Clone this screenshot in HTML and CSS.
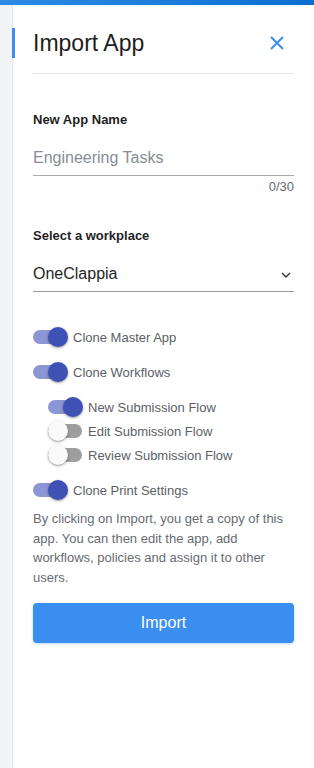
FILE: index.html
```html
<!DOCTYPE html>
<html lang="en">
<head>
<meta charset="utf-8">
<title>Import App</title>
<link rel="stylesheet" href="styles.css">
</head>
<body>
<div class="topbar"></div>
<div class="layout">
  <div class="rail"></div>
  <main class="panel">
    <header class="header">
      <h1 class="title">Import App</h1>
      <button class="close" aria-label="Close">
        <svg width="16" height="16" viewBox="0 0 16 16"><path d="M2 2 L14 14 M14 2 L2 14" stroke="#3a8ef0" stroke-width="2" fill="none"/></svg>
      </button>
    </header>

    <section class="field field-name">
      <div class="label">New App Name</div>
      <div class="input placeholder">Engineering Tasks</div>
      <div class="counter">0/30</div>
    </section>

    <section class="field field-workplace">
      <div class="label">Select a workplace</div>
      <div class="input select">
        <span>OneClappia</span>
        <svg class="chev" width="10" height="6" viewBox="0 0 10 6"><path d="M1 1 L5 5 L9 1" stroke="#333" stroke-width="1.4" fill="none"/></svg>
      </div>
    </section>

    <section class="toggles">
      <div class="row"><span class="switch on"><span class="track"></span><span class="thumb"></span></span><span class="tlabel">Clone Master App</span></div>
      <div class="row"><span class="switch on"><span class="track"></span><span class="thumb"></span></span><span class="tlabel">Clone Workflows</span></div>
      <div class="sub">
        <div class="row"><span class="switch on"><span class="track"></span><span class="thumb"></span></span><span class="tlabel">New Submission Flow</span></div>
        <div class="row"><span class="switch"><span class="track"></span><span class="thumb"></span></span><span class="tlabel">Edit Submission Flow</span></div>
        <div class="row"><span class="switch"><span class="track"></span><span class="thumb"></span></span><span class="tlabel">Review Submission Flow</span></div>
      </div>
      <div class="row"><span class="switch on"><span class="track"></span><span class="thumb"></span></span><span class="tlabel">Clone Print Settings</span></div>
    </section>

    <p class="note">By clicking on Import, you get a copy of this app. You can then edit the app, add workflows, policies and assign it to other users.</p>

    <button class="import">Import</button>
  </main>
</div>
</body>
</html>
```

FILE: styles.css
```css
* { box-sizing: border-box; }
html, body { margin: 0; padding: 0; background: #fff; }
body {
  font-family: "Liberation Sans", Arial, sans-serif;
  color: #222;
  height: 768px;
  overflow: hidden;
}
.topbar {
  height: 5px;
  background: linear-gradient(90deg, #2d8be6, #0b6fd1);
}
.layout {
  display: flex;
  height: 763px;
}
.rail {
  width: 13px;
  flex: 0 0 13px;
  background: #f3f4f8;
  border-right: 1px solid #e6e7ee;
}
.panel {
  flex: 1;
  padding: 0 20px;
}
.header {
  position: relative;
  display: flex;
  align-items: center;
  justify-content: space-between;
  margin-top: 23px;
  padding-bottom: 15px;
  border-bottom: 1px solid #e4e4e6;
}
.header::before {
  content: "";
  position: absolute;
  left: -21px;
  top: 0;
  width: 3px;
  height: 30px;
  background: #3a8ef0;
}
.title {
  margin: 0;
  font-size: 23px;
  font-weight: 400;
  line-height: 30px;
  color: #1e1e1e;
}
.close {
  border: 0;
  background: none;
  padding: 0;
  margin-right: 9px;
  width: 16px;
  height: 16px;
  display: flex;
}
.label {
  font-size: 13px;
  font-weight: 700;
  line-height: 16px;
  color: #1f1f1f;
}
.field-name { margin-top: 38px; }
.field-workplace { margin-top: 33px; }
.input {
  margin-top: 20px;
  font-size: 16px;
  line-height: 20px;
  padding-bottom: 7px;
  border-bottom: 1px solid #a9abb0;
}
.placeholder { color: #878d96; }
.select {
  display: flex;
  align-items: center;
  justify-content: space-between;
  color: #1f1f1f;
  border-bottom-color: #9a9ca1;
}
.chev { margin-right: 3px; margin-top: 2px; }
.counter {
  margin-top: 3px;
  text-align: right;
  font-size: 13px;
  line-height: 16px;
  color: #666a70;
}
.toggles {
  margin-top: 35px;
  display: flex;
  flex-direction: column;
  gap: 15px;
}
.sub {
  display: flex;
  flex-direction: column;
  gap: 4px;
  padding-left: 15px;
}
.row {
  display: flex;
  align-items: center;
  height: 20px;
}
.switch {
  position: relative;
  width: 35px;
  height: 20px;
  flex: 0 0 35px;
}
.track {
  position: absolute;
  left: 0;
  top: 3px;
  width: 34px;
  height: 14px;
  border-radius: 7px;
  background: #9e9e9e;
}
.thumb {
  position: absolute;
  left: 0;
  top: 0;
  width: 20px;
  height: 20px;
  border-radius: 50%;
  background: #fafafa;
  box-shadow: 0 1px 3px rgba(0,0,0,0.3), 0 1px 1px rgba(0,0,0,0.14);
}
.switch.on .track { background: #8d96d4; }
.switch.on .thumb { left: 15px; background: #3f51b5; }
.tlabel {
  margin-left: 5px;
  font-size: 13px;
  color: #5c6066;
}
.note {
  margin: 9px 0 0;
  font-size: 13px;
  line-height: 19.5px;
  color: #676b71;
}
.import {
  display: block;
  width: 100%;
  height: 40px;
  margin-top: 16px;
  border: 0;
  border-radius: 4px;
  background: #3a8ef0;
  color: #fff;
  font-family: "Liberation Sans", Arial, sans-serif;
  font-size: 16px;
  box-shadow: 0 1px 3px rgba(58,142,240,0.35);
}
```
